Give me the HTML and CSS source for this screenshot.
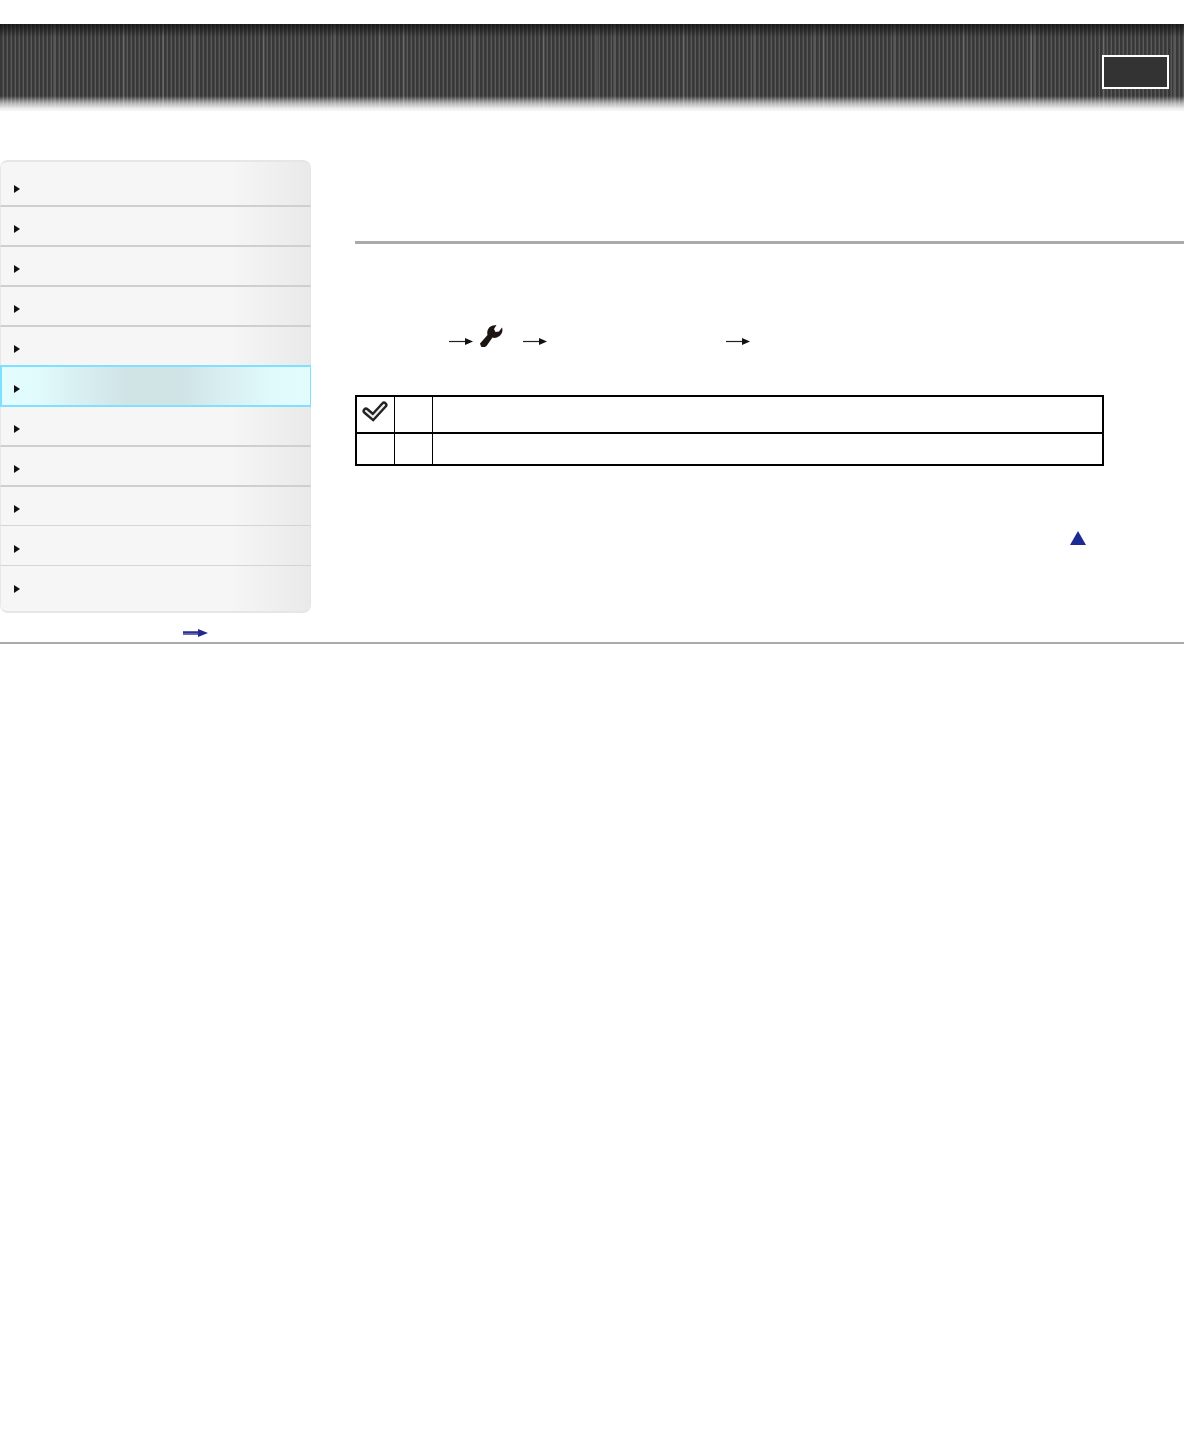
FILE: index.html
```html
<!DOCTYPE html>
<html lang="en">
<head>
    <meta charset="UTF-8">
    <meta name="viewport" content="width=device-width, initial-scale=1.0">
    <title>Help Guide</title>
    <link rel="stylesheet" href="styles.css">
</head>
<body>
    <header class="banner">
        <a class="banner-btn" href="#"></a>
    </header>

    <div class="page">
        <div class="side">
            <ul class="menu">
                <li class="menu-item first"><span class="tri"></span></li>
                <li class="menu-item"><span class="tri"></span></li>
                <li class="menu-item"><span class="tri"></span></li>
                <li class="menu-item"><span class="tri"></span></li>
                <li class="menu-item before-active"><span class="tri"></span></li>
                <li class="menu-item active"><span class="tri"></span></li>
                <li class="menu-item"><span class="tri"></span></li>
                <li class="menu-item"><span class="tri"></span></li>
                <li class="menu-item thin-a"><span class="tri"></span></li>
                <li class="menu-item thin-b"><span class="tri"></span></li>
                <li class="menu-item last"><span class="tri"></span></li>
            </ul>
            <a class="more" href="#">
                <svg class="icon" width="26" height="10" viewBox="0 0 26 10">
                    <path d="M0 3h16v4H0z" fill="#6a6db4"/>
                    <path d="M0 4.500h17" stroke="#2b2f8f" stroke-width="1.500"/>
                    <path d="M15 1l10 4-10 4z" fill="#23288c"/>
                </svg>
            </a>
        </div>

        <main class="content">
            <div class="title-rule"></div>

            <div class="steps">
                <svg class="icon arrow" width="24" height="9" viewBox="0 0 24 9"><path d="M0 4.500h17" stroke="#222" stroke-width="1.200"/><path d="M16 1l8 3.500-8 3.500z" fill="#111"/></svg>
                <svg class="icon wrench" width="23" height="22" viewBox="0 0 23 22">
                    <path d="M0 18.500L7.500 10C6.500 6 8.500 1.500 13 .5L16.500 0l-2.500 4 1.500 3L19 6.500 22 2.500c1.500 4.500-1 8.500-5 10-2 .5-3.500.5-4.500 0L6.500 21C5 22.500 2.500 22.500 1 21.500z" fill="#1d1512"/>
                </svg>
                <svg class="icon arrow after-wrench" width="24" height="9" viewBox="0 0 24 9"><path d="M0 4.500h17" stroke="#222" stroke-width="1.200"/><path d="M16 1l8 3.500-8 3.500z" fill="#111"/></svg>
                <svg class="icon arrow last-arrow" width="24" height="9" viewBox="0 0 24 9"><path d="M0 4.500h17" stroke="#222" stroke-width="1.200"/><path d="M16 1l8 3.500-8 3.500z" fill="#111"/></svg>
            </div>

            <table class="options">
                <tr class="row-a">
                    <td class="col-icon">
                        <svg class="icon" width="37" height="35" viewBox="0 0 37 35">
                            <path d="M9 14l7 6L27 8" fill="none" stroke="#222222" stroke-width="7" stroke-linecap="round" stroke-linejoin="miter"/>
                            <path d="M9 14l7 6L27 8" fill="none" stroke="#eeeeee" stroke-width="2.200" stroke-linecap="round" stroke-linejoin="miter"/>
                        </svg>
                    </td>
                    <td class="col-mid"></td>
                    <td></td>
                </tr>
                <tr class="row-b">
                    <td class="col-icon"></td>
                    <td class="col-mid"></td>
                    <td></td>
                </tr>
            </table>

            <div class="to-top">
                <svg class="icon" width="16" height="14" viewBox="0 0 16 14"><path d="M8 0l8 14H0z" fill="#1c2a94"/></svg>
            </div>
        </main>
    </div>

    <div class="foot-rule"></div>
</body>
</html>
```

FILE: styles.css
```css
* {
    margin: 0;
    padding: 0;
    box-sizing: border-box;
}

body {
    background-color: #ffffff;
    font-family: "Liberation Sans", Arial, sans-serif;
}

.icon {
    display: block;
    filter: blur(0.4px);
}

.banner {
    display: flex;
    justify-content: flex-end;
    align-items: flex-start;
    height: 87px;
    margin-top: 24px;
    padding: 31px 15px 0 0;
    background-color: #3c3c3c;
    background-image:
        linear-gradient(to bottom, rgba(10, 10, 10, 0.7) 0, rgba(10, 10, 10, 0) 13px, rgba(255, 255, 255, 0) 72px, rgba(255, 255, 255, 0.6) 79px, #f2f2f2 85px, #f6f6f6 87px),
        repeating-linear-gradient(90deg, transparent 0, transparent 53px, rgba(255, 255, 255, 0.1) 53px, rgba(255, 255, 255, 0.1) 55px, transparent 55px, transparent 70px),
        repeating-linear-gradient(90deg, transparent 0, transparent 162px, rgba(255, 255, 255, 0.1) 162px, rgba(255, 255, 255, 0.1) 164px, transparent 164px, transparent 217px),
        repeating-linear-gradient(90deg, #383838 0, #383838 2px, #454545 2px, #454545 3px, #5a5a5a 3px, #5a5a5a 4px);
}

.banner-btn {
    display: block;
    width: 67px;
    height: 34px;
    background-color: #333333;
    border: 2px solid #ffffff;
}

.page {
    display: flex;
    margin-top: 49px;
}

.side {
    flex: 0 0 311px;
}

.menu {
    list-style: none;
    border-top: 2px solid #e6e6e6;
    border-bottom: 2px solid #e6e6e6;
    border-radius: 8px;
    overflow: hidden;
    background: linear-gradient(to right, #f6f6f6 0, #f6f6f6 230px, #ebebeb 300px, #e9e9e9 100%);
}

.menu-item {
    display: flex;
    align-items: center;
    height: 40px;
    padding: 6px 0 0 13px;
    border-left: 1px solid #e8e8e8;
    border-right: 1px dotted #dbe0e6;
    border-bottom: 2px solid #cfcfcf;
}

.menu-item.first {
    height: 45px;
    padding-top: 11px;
}

.menu-item.before-active {
    height: 38px;
    border-bottom: none;
}

.menu-item.active {
    height: 42px;
    padding-left: 12px;
    border: 2px solid #80e0ff;
    border-right-width: 1px;
    background: linear-gradient(to right, #e4fdfe 0, #e0f9fb 40px, #d8eef0 80px, #d0e4e6 125px, #d0e4e6 180px, #d8eef0 220px, #e0f9fb 270px, #e2fcfe 100%);
}

.menu-item.thin-a {
    height: 39px;
    border-bottom: 1px solid #d4d4d4;
}

.menu-item.thin-b {
    padding-top: 7px;
    border-bottom: 1px solid #d4d4d4;
}

.menu-item.last {
    height: 45px;
    padding-top: 1px;
    border-bottom: none;
}

.tri {
    display: block;
    width: 0;
    height: 0;
    border-style: solid;
    border-width: 4px 0 4px 6px;
    border-color: transparent transparent transparent #111111;
}

.more {
    display: block;
    width: 26px;
    height: 10px;
    margin: 15px 0 0 183px;
}

.content {
    flex: 1;
    padding-left: 44px;
}

.title-rule {
    height: 3px;
    margin-top: 81px;
    background-color: #aaaaaa;
}

.steps {
    display: flex;
    align-items: flex-end;
    height: 24px;
    margin-top: 80px;
    padding-left: 94px;
}

.arrow {
    margin-bottom: 2px;
}

.wrench {
    margin-left: 7px;
    margin-bottom: 1px;
}

.after-wrench {
    margin-left: 20px;
}

.last-arrow {
    margin-left: 179px;
}

.options {
    width: 749px;
    margin-top: 47px;
    border-collapse: collapse;
    border: 2px solid #000000;
}

.options td {
    border: 1px solid #000000;
    padding: 0;
}

.row-a td {
    height: 37px;
    border-bottom-width: 2px;
}

.row-b td {
    height: 32px;
}

.col-icon {
    width: 38px;
    vertical-align: top;
}

.col-mid {
    width: 38px;
}

.to-top {
    display: flex;
    justify-content: flex-end;
    width: 731px;
    margin-top: 65px;
}

.foot-rule {
    height: 2px;
    margin-top: 4px;
    background-color: #aaaaaa;
}
```
